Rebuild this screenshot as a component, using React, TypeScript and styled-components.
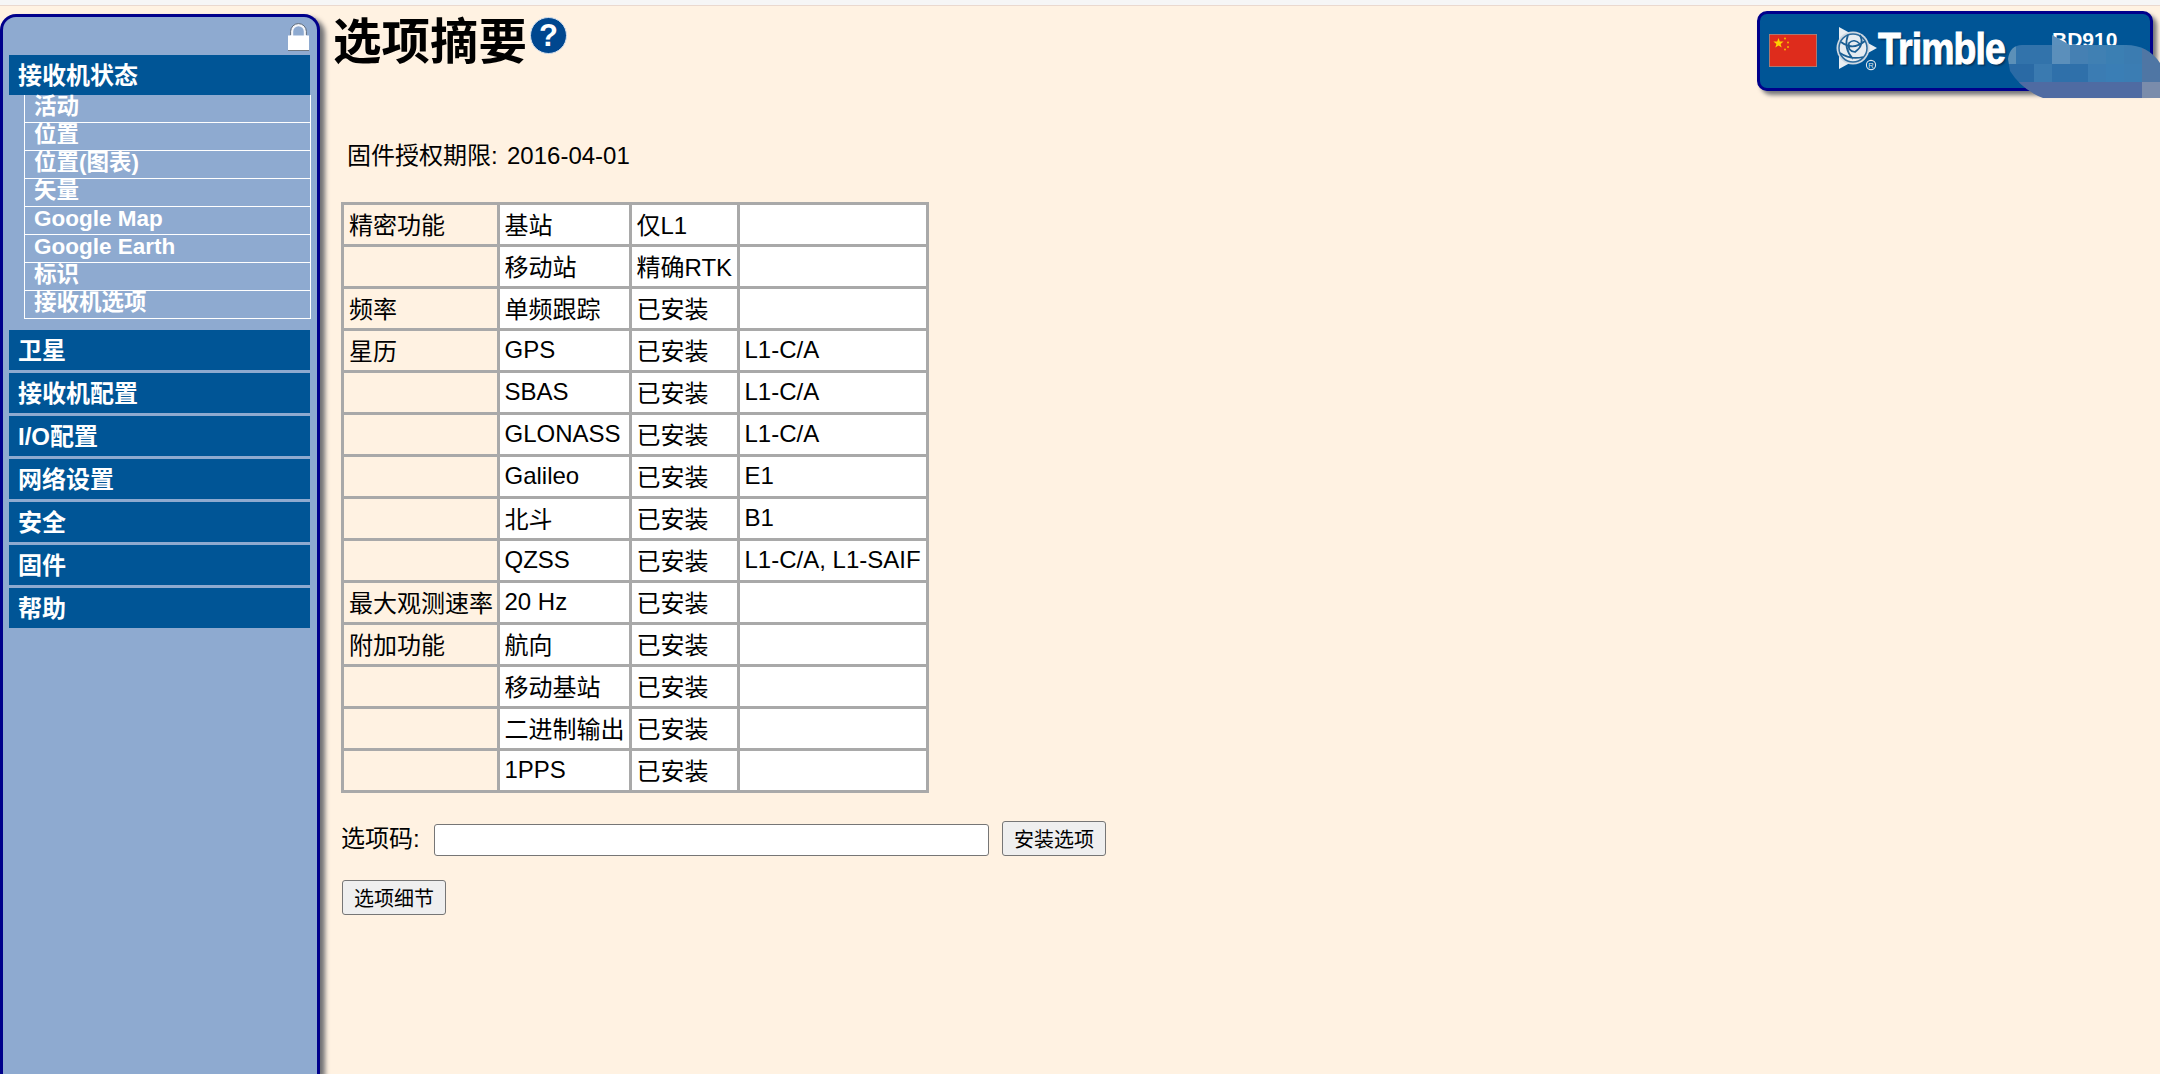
import React from "react";
import styled, { createGlobalStyle } from "styled-components";

const GlobalStyle = createGlobalStyle`
  html, body { margin: 0; padding: 0; height: 100%; overflow: hidden; }
  body {
    background: #fff2e2;
    color: #000;
    font-family: "Liberation Sans", "Noto Sans CJK SC", sans-serif;
  }
`;

const Page = styled.div`
  position: relative;
  display: flex;
  flex-direction: column;
  height: 1074px;
  overflow: hidden;
`;
const TopStrip = styled.div`
  height: 5px;
  flex: none;
  background: #f6f6f6;
  border-bottom: 1px solid #ead9cf;
`;
const Body = styled.div`
  display: flex;
  flex: 1;
  min-height: 0;
  padding-top: 8px;
`;
const Sidebar = styled.nav`
  width: 320px;
  flex: none;
  box-sizing: border-box;
  padding: 0 7px 0 6px;
  background: #8eaad0;
  border: 3px solid #00008b;
  border-bottom: none;
  border-radius: 16px 16px 0 0;
  box-shadow: 5px 4px 5px #707073;
`;
const LockRow = styled.div`
  height: 38px;
  display: flex;
  justify-content: flex-end;
  align-items: flex-start;
  padding: 5px 1px 0 0;
  box-sizing: border-box;
`;
const NavHeader = styled.div<{ $gap?: number }>`
  height: 40px;
  margin-top: ${(p) => p.$gap ?? 3}px;
  padding-left: 9px;
  background: #005596;
  color: #fff;
  font-size: 24px;
  font-weight: bold;
  line-height: 42px;
  white-space: nowrap;
`;
const SubList = styled.div`
  margin: 0 -1px 11px 15px;
  border: solid #fff;
  border-width: 0 1px 1px;
`;
const SubItem = styled.div`
  height: 27px;
  border-top: 1px solid #fff;
  &:first-child { height: 27px; border-top: none; }
  padding-left: 9px;
  color: #fff;
  font-size: 22.5px;
  font-weight: bold;
  line-height: 24px;
  white-space: nowrap;
`;
const Main = styled.main`
  flex: 1;
  min-width: 0;
  padding: 0 7px 0 21px;
`;
const HeaderRow = styled.header`
  display: flex;
  justify-content: space-between;
  align-items: flex-start;
  height: 130px;
  margin-top: -3px;
`;
const TitleWrap = styled.div`
  display: flex;
  align-items: flex-start;
  margin-left: -8px;
`;
const Title = styled.h1`
  margin: 0;
  font-size: 48.5px;
  line-height: 62px;
  font-weight: bold;
`;
const HelpBadge = styled.div`
  width: 35px;
  height: 35px;
  margin: 6px 0 0 3px;
  border-radius: 50%;
  background: #00478f;
  border: 1px solid #d4e0ee;
  color: #fff;
  font-size: 31px;
  font-weight: bold;
  line-height: 35px;
  text-align: center;
`;
const Banner = styled.div`
  width: 396px;
  height: 80px;
  box-sizing: border-box;
  display: flex;
  align-items: flex-start;
  background: #005596;
  border: 3px solid #00008b;
  border-radius: 10px;
  box-shadow: 4px 4px 4px #77777a;
  padding-left: 9px;
`;
const Flag = styled.svg`
  width: 48px;
  height: 33px;
  flex: none;
  margin: 20px 0 0 0;
`;
const LogoMark = styled.svg`
  width: 43px;
  height: 46px;
  flex: none;
  margin: 13px 0 0 18px;
`;
const Wordmark = styled.div`
  width: 130px;
  flex: none;
  margin-top: 10px;
  color: #fff;
  font-size: 44px;
  line-height: 50px;
  font-weight: bold;
  letter-spacing: -1px;
  transform: scaleX(0.85);
  transform-origin: left center;
  -webkit-text-stroke: 1px #fff;
  text-shadow: 2px 2px 2px #00335c;
  white-space: nowrap;
`;
const Model = styled.div`
  margin: 14px 0 0 44px;
  color: #fff;
  font-size: 21px;
  line-height: 24px;
  font-weight: bold;
`;
const Mosaic = styled.svg`
  position: absolute;
  top: 35px;
  left: 2008px;
  width: 152px;
  height: 63px;
`;
const Expiry = styled.div`
  display: flex;
  height: 61px;
  margin-left: 6px;
  font-size: 24px;
  line-height: 30px;
`;
const ExpiryLabel = styled.span`
  width: 160px;
`;
const Table = styled.table`
  width: 588px;
  table-layout: fixed;
  border-collapse: collapse;
`;
const Row = styled.tr`
  height: 42px;
`;
const Cell = styled.td<{ $label?: boolean; $latin?: boolean }>`
  box-sizing: border-box;
  padding: ${(p) => (p.$latin ? 1 : 3)}px 0 0 ${(p) => (p.$label ? 5 : 4.5)}px;
  border: 3px solid #a9a9a9;
  background: ${(p) => (p.$label ? "transparent" : "#fff")};
  font-size: 24px;
  vertical-align: top;
  line-height: 36px;
  white-space: nowrap;
  overflow: hidden;
`;
const FormRow = styled.div`
  display: flex;
  align-items: flex-end;
  margin-top: 28px;
  font-size: 24px;
`;
const FormLabel = styled.label`
  width: 93px;
  line-height: 35px;
`;
const TextInput = styled.input`
  width: 555px;
  height: 32px;
  box-sizing: border-box;
  margin: 0 13px 0 0;
  background: #fff;
  border: 1.5px solid #767676;
  border-radius: 3px;
`;
const Button = styled.button`
  height: 35px;
  width: 104px;
  padding: 0;
  box-sizing: border-box;
  background: #efefef;
  border: 1.5px solid #767676;
  border-radius: 3px;
  color: #000;
  font: 20px "Liberation Sans", "Noto Sans CJK SC", sans-serif;
`;
const SecondRow = styled.div`
  margin: 24px 0 0 1px;
`;

const subs = ["活动", "位置", "位置(图表)", "矢量", "Google Map", "Google Earth", "标识", "接收机选项"];
const heads = ["卫星", "接收机配置", "I/O配置", "网络设置", "安全", "固件", "帮助"];
const rows: [string, string, string, string][] = [
  ["精密功能", "基站", "仅L1", ""],
  ["", "移动站", "精确RTK", ""],
  ["频率", "单频跟踪", "已安装", ""],
  ["星历", "GPS", "已安装", "L1-C/A"],
  ["", "SBAS", "已安装", "L1-C/A"],
  ["", "GLONASS", "已安装", "L1-C/A"],
  ["", "Galileo", "已安装", "E1"],
  ["", "北斗", "已安装", "B1"],
  ["", "QZSS", "已安装", "L1-C/A, L1-SAIF"],
  ["最大观测速率", "20 Hz", "已安装", ""],
  ["附加功能", "航向", "已安装", ""],
  ["", "移动基站", "已安装", ""],
  ["", "二进制输出", "已安装", ""],
  ["", "1PPS", "已安装", ""],
];
const isLatin = (s: string) => /^[\x00-\x7f]*$/.test(s);

const mosaicCells: [number, number, number, number, string][] = [
  [44, 0, 18, 10, "#5b90bd"],
  [0, 10, 8, 19, "#5c90b8"], [8, 10, 18, 19, "#3273ab"], [26, 10, 18, 19, "#3273ab"], [44, 10, 18, 19, "#5b8fbb"],
  [62, 10, 18, 19, "#4580b3"], [80, 10, 18, 19, "#4080b3"], [98, 10, 18, 19, "#3b7fb3"], [116, 10, 18, 19, "#3b7cb1"], [134, 10, 18, 19, "#4f76a4"],
  [0, 29, 26, 18, "#2a6aa5"], [26, 29, 18, 18, "#3a7ab0"], [44, 29, 18, 18, "#2f70aa"], [62, 29, 18, 18, "#2f70aa"],
  [80, 29, 18, 18, "#3b7cb3"], [98, 29, 18, 18, "#3a7eb5"], [116, 29, 18, 18, "#3b7db3"], [134, 29, 18, 18, "#4f76a4"],
  [0, 47, 134, 16, "#4f6ba2"], [134, 47, 18, 16, "#7a8cab"],
];

export default function App() {
  return (
    <Page>
      <GlobalStyle />
      <TopStrip />
      <Body>
        <Sidebar>
          <LockRow>
            <svg width="21" height="29" viewBox="0 0 21 29">
              <path d="M4 15V9.5a6.5 6.5 0 0 1 13 0V15" fill="none" stroke="#f4f6fa" strokeWidth="2.4" />
              <path d="M2.6 13V9.5a7.9 7.9 0 0 1 15.8 0V13" fill="none" stroke="#5d6672" strokeWidth="0.9" />
              <rect x="0" y="13.5" width="21" height="14.5" fill="#fff" />
              <rect x="0" y="28" width="21" height="1" fill="#6f7780" />
            </svg>
          </LockRow>
          <NavHeader $gap={0}>接收机状态</NavHeader>
          <SubList>
            {subs.map((s) => (
              <SubItem key={s}>{s}</SubItem>
            ))}
          </SubList>
          {heads.map((h) => (
            <NavHeader key={h}>{h}</NavHeader>
          ))}
        </Sidebar>
        <Main>
          <HeaderRow>
            <TitleWrap>
              <Title>选项摘要</Title>
              <HelpBadge>?</HelpBadge>
            </TitleWrap>
            <Banner>
              <Flag viewBox="0 0 48 33">
                <rect width="48" height="33" fill="#de2c1c" stroke="#9a8f8c" strokeWidth="1.5" />
                <polygon points="9.5,4 10.8,7.6 14.6,7.6 11.6,10 12.7,13.6 9.5,11.4 6.3,13.6 7.4,10 4.4,7.6 8.2,7.6" fill="#ffd200" />
                <circle cx="16" cy="4.5" r="1" fill="#f7b500" />
                <circle cx="19" cy="8.5" r="1" fill="#f7b500" />
                <circle cx="19" cy="13" r="1" fill="#f7b500" />
                <circle cx="16" cy="15.5" r="1" fill="#f7b500" />
              </Flag>
              <LogoMark viewBox="0 0 43 46">
                <path d="M4 0 L42 21 L4 42 Z" fill="#e8eef3" />
                <circle cx="18" cy="21" r="16.5" fill="#cfd9e2" />
                <circle cx="18" cy="21" r="14" fill="#e6ecf1" stroke="#2c6a9c" strokeWidth="1.5" />
                <path d="M6 15 Q18 24 30 14 M5 26 Q15 33 28 30 M13 8 Q8 21 18 32 M25 8 Q30 18 20 25 Q12 24 14 16 Q19 11 25 17" fill="none" stroke="#1b5f94" strokeWidth="1.7" />
                <circle cx="36" cy="38" r="4.6" fill="none" stroke="#dfe7ee" strokeWidth="1.1" />
                <text x="36" y="41" textAnchor="middle" fontSize="7.5" fill="#dfe7ee" fontFamily="Liberation Sans">R</text>
              </LogoMark>
              <Wordmark>Trimble</Wordmark>
              <Model>BD910</Model>
            </Banner>
          </HeaderRow>
          <Expiry>
            <ExpiryLabel>固件授权期限:</ExpiryLabel>
            <span>2016-04-01</span>
          </Expiry>
          <Table>
            <colgroup>
              <col style={{ width: 156 }} />
              <col style={{ width: 132 }} />
              <col style={{ width: 108 }} />
              <col style={{ width: 189 }} />
            </colgroup>
            <tbody>
              {rows.map((r, i) => (
                <Row key={i}>
                  <Cell $label>{r[0]}</Cell>
                  <Cell $latin={isLatin(r[1])}>{r[1]}</Cell>
                  <Cell $latin={isLatin(r[2])}>{r[2]}</Cell>
                  <Cell $latin={isLatin(r[3])}>{r[3]}</Cell>
                </Row>
              ))}
            </tbody>
          </Table>
          <FormRow>
            <FormLabel>选项码:</FormLabel>
            <TextInput />
            <Button>安装选项</Button>
          </FormRow>
          <SecondRow>
            <Button>选项细节</Button>
          </SecondRow>
        </Main>
      </Body>
      <Mosaic viewBox="0 0 152 63">
        <defs>
          <clipPath id="blob">
            <path d="M0 24 Q2 10 14 10 L44 10 L44 0 L62 10 L118 10 Q140 10 152 28 L152 63 L35 63 Q14 55 2 36 Z" />
          </clipPath>
        </defs>
        <g clipPath="url(#blob)">
          {mosaicCells.map(([x, y, w, h, c], i) => (
            <rect key={i} x={x} y={y} width={w} height={h} fill={c} />
          ))}
        </g>
      </Mosaic>
    </Page>
  );
}
